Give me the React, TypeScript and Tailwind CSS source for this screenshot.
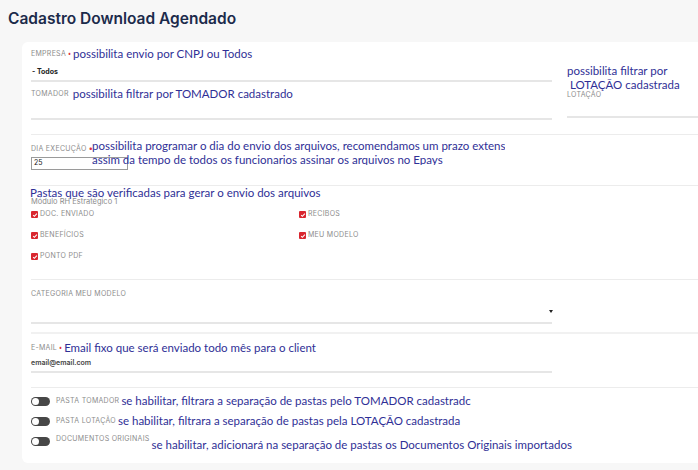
import React from "react";

const note = "font-['Lato','Open_Sans',sans-serif] text-[11.5px] leading-[14px] text-[#2f2f96]";
const label = "font-['Inter',sans-serif] text-[7px] uppercase tracking-[0.04em] text-[#8c8c8c]";

function Req() {
  return <span className="mx-[2px] text-[8px] leading-none text-[#e0343c]">•</span>;
}

function Check({ text }: { text: string }) {
  return (
    <div className="flex h-[21px] items-center gap-[2px]">
      <span className="flex h-[7px] w-[7px] items-center justify-center rounded-[1px] bg-[#d9262f]">
        <svg viewBox="0 0 8 8" className="h-[6px] w-[6px]">
          <path d="M1.5 4.2 L3.2 5.8 L6.5 2.2" fill="none" stroke="white" strokeWidth="1.4" />
        </svg>
      </span>
      <span className={`${label} text-[7.5px] tracking-[0.02em]`}>{text}</span>
    </div>
  );
}

function Toggle({ text, hint, low }: { text: string; hint: string; low?: boolean }) {
  return (
    <div className="flex h-[20px] items-center">
      <span className="relative mr-[6px] h-[9px] w-[19px] shrink-0 rounded-full bg-[#474747]">
        <span className="absolute left-[1px] top-[1px] h-[7px] w-[7px] rounded-full bg-white" />
      </span>
      <span className={`${label} text-[6.5px] ${low ? "self-start pt-[3px]" : ""}`}>{text}</span>
      <span className={`${note} ml-[2px] whitespace-nowrap ${low ? "mt-[7px]" : ""}`}>{hint}</span>
    </div>
  );
}

export default function App() {
  return (
    <div className="h-[470px] w-[698px] overflow-hidden bg-[#f7f7f7]">
      <h1 className="px-2 pt-[8px] font-['Inter',sans-serif] text-[15.5px] font-semibold leading-[22px] text-[#1c2b4b]">
        Cadastro Download Agendado
      </h1>

      <div className="ml-[22px] mt-[12px] h-[421px] w-[700px] rounded-md bg-white pl-[9px] pt-[5px]">
        {/* empresa / tomador / lotação */}
        <div className="flex">
          <div className="w-[521px]">
            <div className="border-b-2 border-[#e6e6e6] pb-[1px]">
              <div className="flex h-[14px] items-center">
                <span className={label}>Empresa</span>
                <Req />
                <span className={note}>possibilita envio por CNPJ ou Todos</span>
              </div>
              <div className="mt-[4px] flex h-[14px] items-center pl-[1px] font-['Inter',sans-serif] text-[7px] font-bold text-[#222]">
                - Todos
              </div>
            </div>
            <div className="mt-[5px] border-b-2 border-[#e6e6e6] pb-[17px]">
              <div className="flex h-[14px] items-center gap-[4px]">
                <span className={label}>Tomador</span>
                <span className={note}>possibilita filtrar por TOMADOR cadastrado</span>
              </div>
            </div>
          </div>
          <div className="ml-[15px] flex-1 pt-[17px]">
            <div className="border-b-2 border-[#e6e6e6] pb-[17px]">
              <div className={note}>
                possibilita filtrar por
                <br />
                &nbsp;LOTAÇÃO cadastrada
              </div>
              <div className={`${label} -mt-[1px] text-[6px] leading-[8px]`}>Lotação</div>
            </div>
          </div>
        </div>

        {/* dia execução */}
        <div className="relative mt-[14px] h-[51px] border-t border-[#ececec] pt-[9px]">
          <div className={`${label} tracking-[0.01em] leading-[8px]`}>
            Dia execução<Req />
          </div>
          <div className="mt-[4px] flex h-[13px] w-[97px] items-center border border-[#9a9a9a] pl-[2px] font-['Inter',sans-serif] text-[7px] text-[#222]">
            25
          </div>
          <div className={`${note} absolute left-[61px] top-[4px] h-[26px] w-[413px] overflow-hidden whitespace-nowrap`}>
            possibilita programar o dia do envio dos arquivos, recomendamos um prazo extenso
            <br />
            assim da tempo de todos os funcionarios assinar os arquivos no Epays
          </div>
        </div>

        {/* pastas */}
        <div className="h-[94px] border-t border-[#ececec]">
          <div className={`${note} -ml-[1px] leading-[12px]`}>Pastas que são verificadas para gerar o envio dos arquivos</div>
          <div className="-mt-[2px] font-['Inter',sans-serif] text-[7.5px] leading-[8px] text-[#8c8c8c]">
            Módulo RH Estratégico 1
          </div>
          <div className="mt-[-2px] grid w-[536px] grid-cols-2">
            <div>
              <Check text="Doc. enviado" />
              <Check text="Benefícios" />
              <Check text="Ponto PDF" />
            </div>
            <div>
              <Check text="Recibos" />
              <Check text="Meu modelo" />
            </div>
          </div>
        </div>

        {/* categoria */}
        <div className="h-[53px] border-t border-[#ececec] pt-[10px]">
          <div className="relative w-[521px] border-b-2 border-[#e6e6e6] pb-[24px]">
            <div className={`${label} leading-[8px]`}>Categoria meu modelo</div>
            <span className="absolute right-[-1px] top-[20px] h-0 w-0 border-x-[2px] border-t-[3px] border-x-transparent border-t-[#222]" />
          </div>
        </div>

        {/* e-mail */}
        <div className="h-[55px] border-t-2 border-[#f1f1f1] pt-[7px]">
          <div className="w-[521px] border-b-2 border-[#e6e6e6]">
            <div className="flex h-[14px] items-center">
              <span className={label}>E-mail</span>
              <Req />
              <span className={note}>Email fixo que será enviado todo mês para o client</span>
            </div>
            <div className="flex h-[16px] items-center pt-[1px] font-['Inter',sans-serif] text-[7px] font-semibold text-[#444]">
              email@email.com
            </div>
          </div>
        </div>

        {/* pastas por tomador / lotação / originais */}
        <div className="border-t border-[#ececec] pt-[3px]">
          <Toggle text="Pasta tomador" hint="se habilitar, filtrara a separação de pastas pelo TOMADOR cadastradc" />
          <Toggle text="Pasta lotação" hint="se habilitar, filtrara a separação de pastas pela LOTAÇÃO cadastrada" />
          <Toggle text="Documentos originais" hint="se habilitar, adicionará na separação de pastas os Documentos Originais importados" low />
        </div>
      </div>
    </div>
  );
}
